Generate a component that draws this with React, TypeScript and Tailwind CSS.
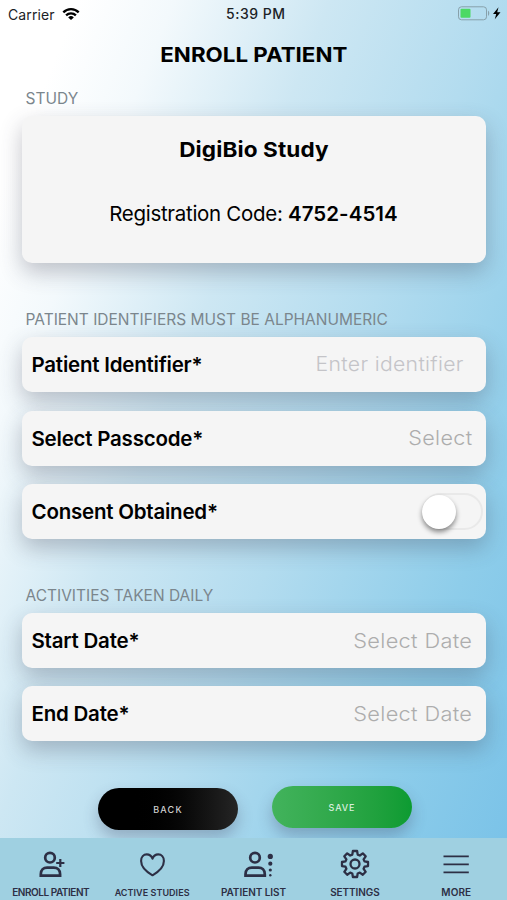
import { FC, ReactNode } from "react";
import clsx from "clsx";

const StatusBar: FC = () => (
  <div className="relative flex h-7 items-center justify-between pl-2 pr-1 text-[14px] text-[#1c2226]">
    <div className="flex items-center gap-[7px]">
      <span className="tracking-[0.1px]">Carrier</span>
      <svg width="18" height="13" viewBox="0 0 18 13" fill="none" stroke="#000" strokeWidth="2.3">
        <path d="M1.3 4.4a10.9 10.9 0 0 1 15.4 0" />
        <path d="M4.1 7.4a6.9 6.9 0 0 1 9.8 0" />
        <path d="M9 12.1 6.2 9.4a4 4 0 0 1 5.6 0Z" fill="#000" stroke="none" />
      </svg>
    </div>
    <span className="absolute left-[226px] top-[3px] font-medium tracking-[0.5px]">5:39 PM</span>
    <div className="flex items-center">
      <svg width="47" height="16" viewBox="0 0 47 16">
        <rect x="2.5" y="0.8" width="28" height="13" rx="3" fill="none" stroke="#87a0aa" />
        <rect x="4.5" y="2.8" width="10" height="9" rx="1" fill="#4cd964" />
        <path d="M32 4.8c1.7.5 1.7 4.5 0 5Z" fill="#87a0aa" />
        <path d="M42.5 1.3 37 8.1h3.2l-1.4 5.2 5.7-7h-3.3Z" fill="#000" />
      </svg>
    </div>
  </div>
);

const SectionLabel: FC<{ children: ReactNode; className?: string }> = ({ children, className }) => (
  <h2 className={clsx("flex h-5 items-center whitespace-nowrap pl-1 pt-0.5 text-[15.5px] text-[#7b868d]", className)}>
    {children}
  </h2>
);

interface RowProps {
  label: string;
  children: ReactNode;
}

const Row: FC<RowProps> = ({ label, children }) => (
  <div className="flex h-[55px] items-center justify-between rounded-[10px] bg-[#f5f5f5] pl-[10px] shadow-[0_9px_22px_rgba(60,60,80,0.3)]">
    <span className="pt-0.5 text-[20.5px] font-semibold tracking-[-0.22px] text-black">{label}</span>
    {children}
  </div>
);

const ink = "#2d2f45";

const EnrollIcon = () => (
  <svg width="30" height="30" viewBox="0 0 30 30" fill="none" stroke={ink} strokeWidth="2.7">
    <circle cx="14" cy="8.7" r="4.8" />
    <path d="M4.8 26.6v-1.4c0-4.2 2.8-6.6 6.3-6.6h6.7c3.5 0 6.3 2.4 6.3 6.6v1.4Z" />
    <path d="M24.3 9.9v8.2M20.2 14h8.2" strokeWidth="2.2" />
  </svg>
);

const HeartIcon = () => (
  <svg width="30" height="30" viewBox="0 0 30 30" fill="none" stroke={ink} strokeWidth="2.1" strokeLinejoin="round">
    <path d="M15.5 26.3C10.8 23.6 4.1 18.3 4.1 12c0-3.9 2.5-6.6 5.6-6.6 2.7 0 4.8 1.5 5.8 4.3 1-2.8 3.1-4.3 5.8-4.3 3.1 0 5.6 2.7 5.6 6.6 0 6.3-6.7 11.6-11.4 14.3Z" />
  </svg>
);

const ListIcon = () => (
  <svg width="40" height="30" viewBox="0 0 40 30" fill="none" stroke={ink} strokeWidth="2.7">
    <circle cx="22" cy="8.7" r="4.8" />
    <path d="M12.5 26.6v-1.4c0-4.2 2.8-6.6 6.3-6.6h6.7c3.5 0 6.3 2.4 6.3 6.6v1.4Z" />
    <g fill={ink} stroke="none">
      <circle cx="37.3" cy="7.4" r="2.6" />
      <circle cx="37.3" cy="14.7" r="2.1" />
      <circle cx="37.3" cy="21" r="1.6" />
      <circle cx="37.3" cy="26.2" r="1.2" />
    </g>
  </svg>
);

const GearIcon = () => (
  <svg width="30" height="30" viewBox="0 0 30 30" fill="none" stroke={ink} strokeWidth="2.3" strokeLinejoin="round">
    <path d="M12.3 5.6 12.9 2h4.2l.6 3.6 2.1.9 3-2.1 2.9 2.9-2.1 3 .9 2.1 3.5.6v4.1l-3.5.6-.9 2.1 2.1 3-2.9 2.9-3-2.1-2.1.9-.6 3.5h-4.2l-.6-3.5-2.1-.9-3 2.1-2.9-2.9 2.1-3-.9-2.1-3.5-.6v-4.1l3.5-.6.9-2.1-2.1-3 2.9-2.9 3 2.1Z" />
    <circle cx="15" cy="15" r="4.5" />
  </svg>
);

const MenuIcon = () => (
  <svg width="30" height="30" viewBox="0 0 30 30" stroke={ink} strokeWidth="1.8">
    <path d="M2.5 7.4h25.3M2.5 15.4h25.3M2.5 23.4h25.3" />
  </svg>
);

const tabs = [
  { name: "ENROLL PATIENT", icon: <EnrollIcon />, text: "text-[10px] tracking-[-0.45px]" },
  { name: "ACTIVE STUDIES", icon: <HeartIcon />, text: "text-[9px] tracking-[0.05px]" },
  { name: "PATIENT LIST", icon: <ListIcon />, text: "text-[10px] tracking-[-0.05px]" },
  { name: "SETTINGS", icon: <GearIcon />, text: "text-[10px] tracking-[-0.1px]" },
  { name: "MORE", icon: <MenuIcon />, text: "text-[10px] tracking-[0.1px]" },
];

const App: FC = () => {
  return (
    <main className="flex h-[900px] w-[507px] flex-col overflow-hidden bg-[linear-gradient(112deg,#ffffff_9%,#f3f9fc_20%,#cde7f3_38%,#b3dcef_57%,#8ecdea_80%,#7bc3e8_97%)] font-['Inter',sans-serif]">
      <StatusBar />
      <h1 className="mt-[11px] flex h-[30px] items-center justify-center pt-0.5 text-[20.5px] font-bold text-black">
        <span className="origin-center scale-x-[1.09]">ENROLL PATIENT</span>
      </h1>

      <div className="mx-auto mt-[19px] flex w-[464px] flex-col">
        <SectionLabel>STUDY</SectionLabel>
        <section className="mt-2 flex h-[147px] flex-col items-center rounded-[10px] bg-[#f5f5f5] pt-[19px] text-black shadow-[0_9px_22px_rgba(60,60,80,0.3)]">
          <h3 className="h-[30px] origin-center scale-x-[1.1] text-[20.5px] font-bold leading-[30px] tracking-[0.1px]">
            DigiBio Study
          </h3>
          <p className="mt-[34px] text-[20.5px] leading-[30px] tracking-[-0.3px]">
            Registration Code: <b className="font-semibold tracking-[0.05px]">4752-4514</b>
          </p>
        </section>

        <SectionLabel className="mt-[46px]">PATIENT IDENTIFIERS MUST BE ALPHANUMERIC</SectionLabel>
        <div className="mt-2 flex flex-col gap-[18.5px]">
          <Row label="Patient Identifier*">
            <span className="mb-0.5 mr-[22px] origin-right scale-x-[1.06] text-[20px] font-light tracking-[0.3px] text-[#c4c4c8]">
              Enter identifier
            </span>
          </Row>
          <Row label="Select Passcode*">
            <span className="mr-[13px] origin-right scale-x-[1.08] text-[20px] font-light tracking-[0.3px] text-[#adadad]">Select</span>
          </Row>
          <Row label="Consent Obtained*">
            <button className="mr-[3px] flex h-[37px] w-[61px] items-center rounded-full border-2 border-[#e9e9e9]">
              <span className="-ml-0.5 size-[34px] rounded-full bg-white shadow-[0_3px_5px_rgba(0,0,0,0.45)]" />
            </button>
          </Row>
        </div>

        <SectionLabel className="mt-[46px]">ACTIVITIES TAKEN DAILY</SectionLabel>
        <div className="mt-2 flex flex-col gap-[18px]">
          <Row label="Start Date*">
            <span className="mr-[13px] origin-right scale-x-[1.09] text-[20px] font-light tracking-[0.3px] text-[#adadad]">Select Date</span>
          </Row>
          <Row label="End Date*">
            <span className="mr-[13px] origin-right scale-x-[1.09] text-[20px] font-light tracking-[0.3px] text-[#adadad]">Select Date</span>
          </Row>
        </div>
      </div>

      <div className="mt-[45px] flex items-start gap-[34px] pl-[98px] text-[9px] font-medium">
        <button className="mt-0.5 h-[42px] w-[140px] rounded-full bg-linear-to-r from-black from-20% to-[#252525] pt-0.5 tracking-[1.2px] text-[#d0d0d0] shadow-[0_8px_15px_rgba(60,60,90,0.3)]">
          BACK
        </button>
        <button className="h-[42px] w-[140px] rounded-full bg-linear-to-r from-[#42b35c] to-[#0c9b32] pt-px tracking-[0.9px] text-[#d9f0df] shadow-[0_8px_15px_rgba(60,60,90,0.3)]">
          SAVE
        </button>
      </div>

      <nav className="relative mt-auto grid h-[62px] shrink-0 grid-cols-5 bg-[#9fd0e1] pt-[11px]">
        {tabs.map((tab) => (
          <a key={tab.name} className="flex flex-col items-center">
            {tab.icon}
            <span className={clsx("mt-1.5 whitespace-nowrap font-semibold leading-[15px] text-[#2d2f45]", tab.text)}>
              {tab.name}
            </span>
          </a>
        ))}
      </nav>
    </main>
  );
};

export default App;
